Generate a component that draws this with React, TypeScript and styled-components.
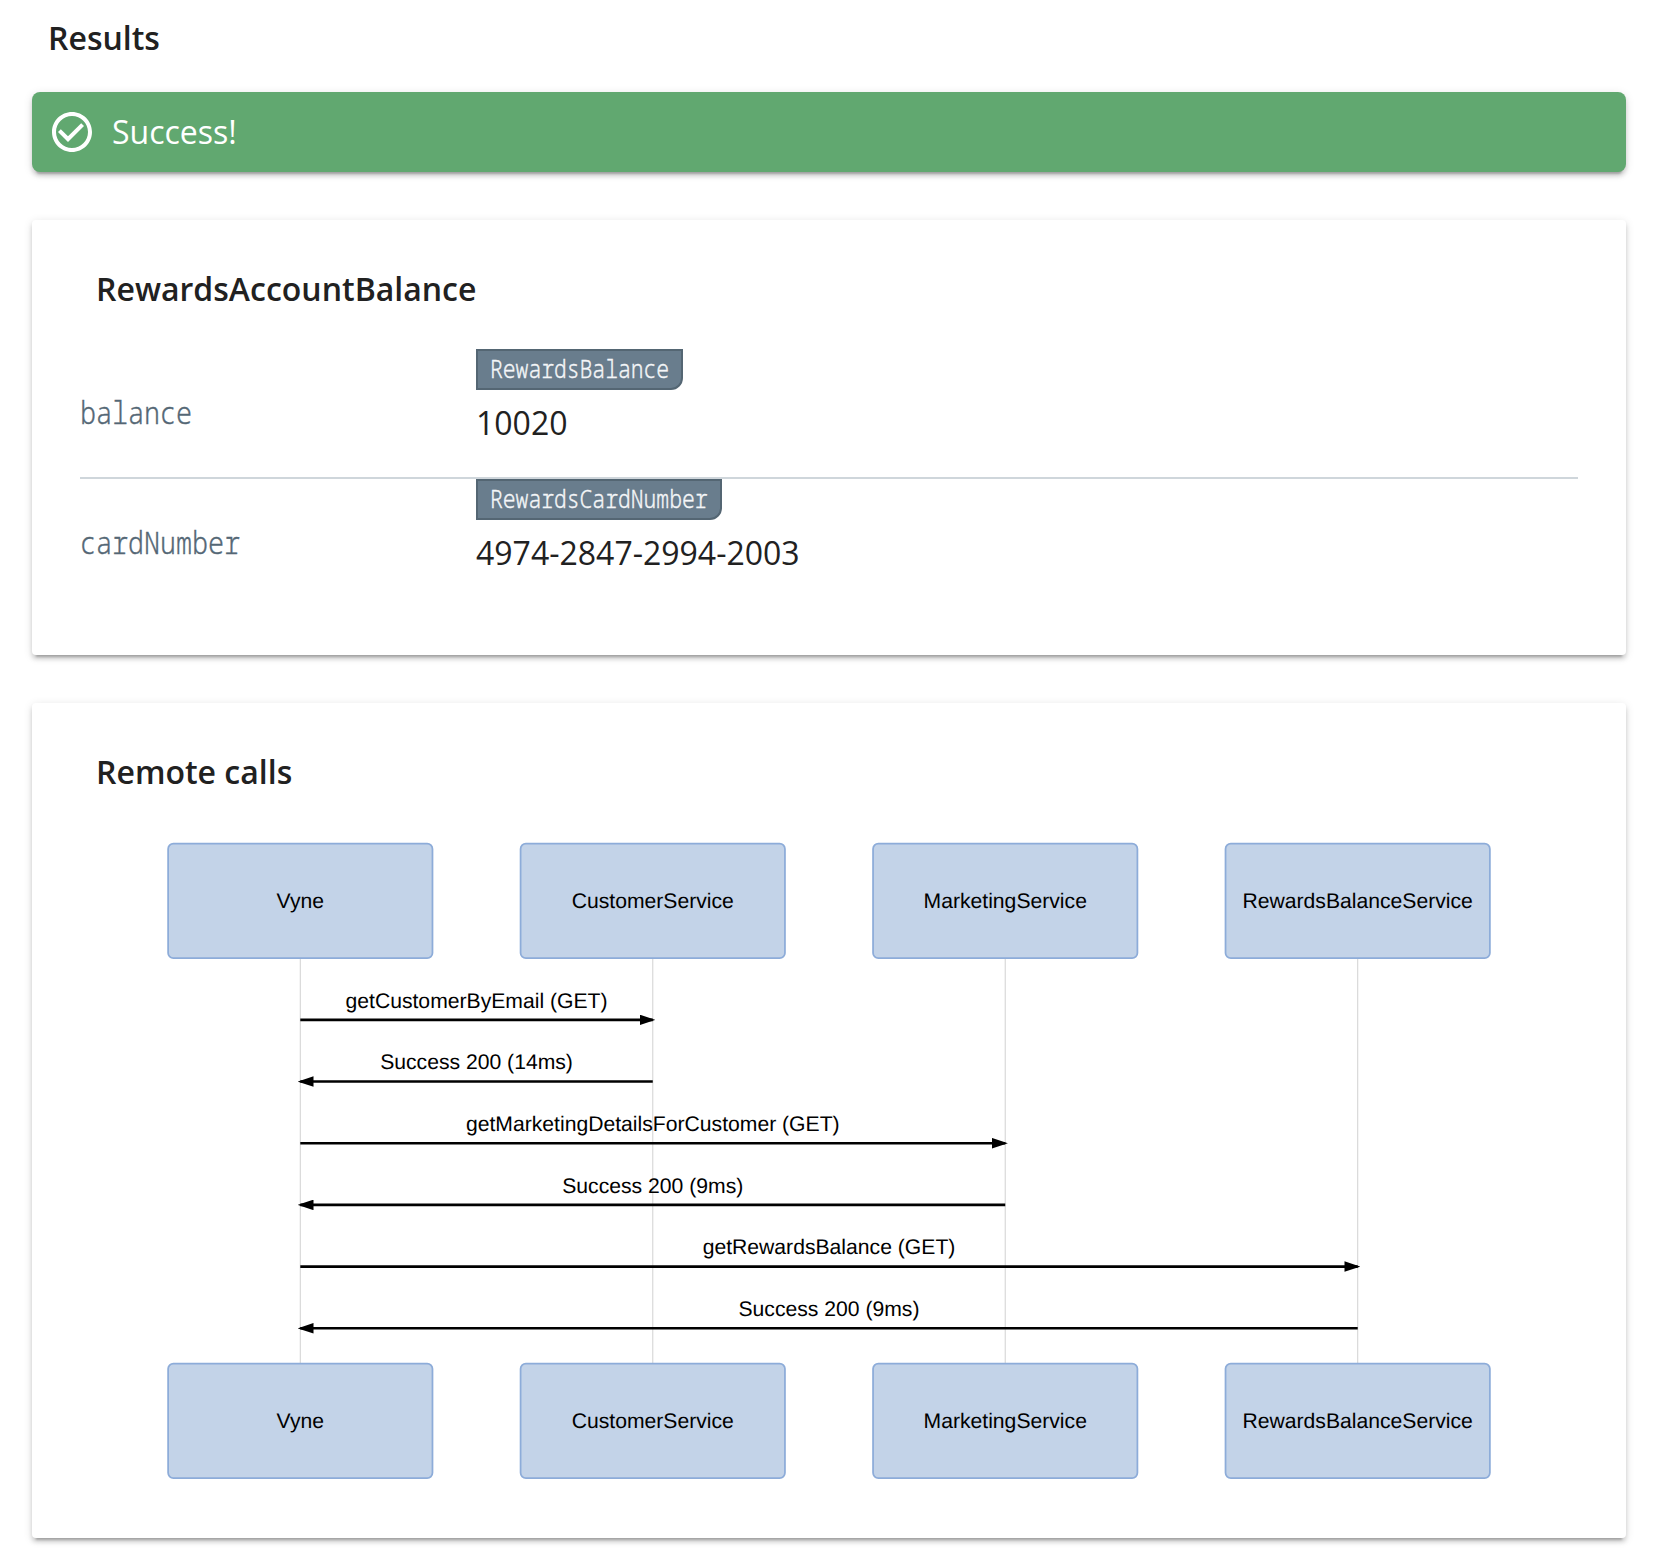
import React from "react";
import styled, { createGlobalStyle } from "styled-components";

const GlobalStyle = createGlobalStyle`
  body {
    margin: 0;
    background: #fff;
    color: #212121;
    font-family: "Open Sans", "Noto Sans", sans-serif;
    font-size: 32px;
    line-height: 44px;
  }
`;

const Page = styled.main`
  box-sizing: border-box;
  width: 1654px;
  padding: 16px 28px 26px 32px;
`;

const Heading = styled.h3<{ $height: number; $line?: number }>`
  margin: 0;
  padding: 0 16px;
  height: ${(p) => p.$height}px;
  font-size: 32px;
  font-weight: 600;
  line-height: ${(p) => p.$line ?? 42}px;
`;

const elevation = `
  0 6px 2px -4px rgba(0, 0, 0, 0.2),
  0 4px 4px 0 rgba(0, 0, 0, 0.14),
  0 2px 10px 0 rgba(0, 0, 0, 0.12)
`;

const Banner = styled.div`
  display: flex;
  align-items: center;
  gap: 16px;
  height: 80px;
  padding: 0 16px;
  border-radius: 8px;
  background: #61a870;
  color: #fff;
  box-shadow: ${elevation};
`;

const Card = styled.section<{ $bottom: number }>`
  margin-top: 48px;
  padding: 48px 48px ${(p) => p.$bottom}px;
  border-radius: 4px;
  background: #fff;
  box-shadow: ${elevation};
`;

const Attribute = styled.div`
  display: grid;
  grid-template-columns: 396px 1fr;
  height: 128px;

  & + & {
    border-top: 2px solid #cfd6db;
  }
`;

/* Condensed mono face: glyphs are narrowed to half an em per character. */
const Condensed = styled.span<{ $chars: number }>`
  display: inline-block;
  font-family: "Noto Sans Mono", "DejaVu Sans Mono", monospace;
  font-weight: 300;
  -webkit-text-stroke: 0.4px currentColor;
  margin-right: ${(p) => -p.$chars * 0.1}em;
  transform: scaleX(0.8333);
  transform-origin: 0 50%;
  white-space: nowrap;
`;

const AttributeName = styled.div`
  align-self: center;
  padding-bottom: 3px;
  color: #546775;
  line-height: 44px;
`;

const AttributeValue = styled.div`
  display: flex;
  flex-direction: column;
  align-items: flex-start;
  gap: 11px;
`;

const TypeTag = styled.div`
  box-sizing: border-box;
  height: 41px;
  padding: 0 12.5px 0 11.5px;
  border: 2px solid #546673;
  border-bottom-right-radius: 12px;
  background: #697d8d;
  color: #f4f6f8;
  font-size: 25.6px;
  line-height: 35px;
`;

const Diagram = styled.svg`
  display: block;
  width: 1498px;
  height: 669.7px;
  font-family: "Liberation Sans", Arial, sans-serif;
  font-size: 12px;
  text-rendering: geometricPrecision;
`;

function Mono({ text }: { text: string }) {
  return <Condensed $chars={text.length}>{text}</Condensed>;
}

const attributes = [
  { name: "balance", type: "RewardsBalance", value: "10020" },
  { name: "cardNumber", type: "RewardsCardNumber", value: "4974-2847-2994-2003" },
];

const actors = ["Vyne", "CustomerService", "MarketingService", "RewardsBalanceService"];

const calls = [
  { from: 0, to: 1, label: "getCustomerByEmail (GET)" },
  { from: 1, to: 0, label: "Success 200 (14ms)" },
  { from: 0, to: 2, label: "getMarketingDetailsForCustomer (GET)" },
  { from: 2, to: 0, label: "Success 200 (9ms)" },
  { from: 0, to: 3, label: "getRewardsBalance (GET)" },
  { from: 3, to: 0, label: "Success 200 (9ms)" },
];

const laneX = (i: number) => 75 + i * 200;

function Actor({ index, y }: { index: number; y: number }) {
  return (
    <g>
      <rect
        x={laneX(index) - 75}
        y={y}
        width={150}
        height={65}
        rx={3}
        fill="#c3d3e8"
        stroke="#8dacd9"
      />
      <text x={laneX(index)} y={y + 36.6} textAnchor="middle">
        {actors[index]}
      </text>
    </g>
  );
}

function SequenceDiagram() {
  return (
    <Diagram viewBox="-50 -10 850 380">
      <defs>
        <marker id="arrowhead" refX="5" refY="2" markerWidth="6" markerHeight="4" orient="auto">
          <path d="M0 0V4L6 2Z" />
        </marker>
      </defs>
      {actors.map((name, i) => (
        <line
          key={name}
          x1={laneX(i)}
          x2={laneX(i)}
          y1={65}
          y2={295}
          stroke="#d4d4d4"
          strokeWidth={0.6}
        />
      ))}
      {actors.map((name, i) => (
        <React.Fragment key={name}>
          <Actor index={i} y={0} />
          <Actor index={i} y={295} />
        </React.Fragment>
      ))}
      {calls.map(({ from, to, label }, i) => {
        const y = 100 + i * 35;
        return (
          <g key={i}>
            <text x={(laneX(from) + laneX(to)) / 2} y={y - 7} textAnchor="middle">
              {label}
            </text>
            <line
              x1={laneX(from)}
              x2={laneX(to)}
              y1={y}
              y2={y}
              stroke="#000"
              strokeWidth={1.5}
              markerEnd="url(#arrowhead)"
            />
          </g>
        );
      })}
    </Diagram>
  );
}

export default function App() {
  return (
    <>
      <GlobalStyle />
      <Page>
        <Heading $height={76} $line={44}>
          Results
        </Heading>
        <Banner>
          <svg width="48" height="48" viewBox="0 0 24 24" fill="currentColor">
            <path d="M16.59 7.58L10 14.17l-3.59-3.58L5 12l5 5 8-8zM12 2C6.48 2 2 6.48 2 12s4.48 10 10 10 10-4.48 10-10S17.52 2 12 2zm0 18c-4.42 0-8-3.58-8-8s3.58-8 8-8 8 3.58 8 8-3.58 8-8 8z" />
          </svg>
          <span>Success!</span>
        </Banner>
        <Card $bottom={48}>
          <Heading $height={81}>RewardsAccountBalance</Heading>
          {attributes.map((a) => (
            <Attribute key={a.name}>
              <AttributeName>
                <Mono text={a.name} />
              </AttributeName>
              <AttributeValue>
                <TypeTag>
                  <Mono text={a.type} />
                </TypeTag>
                <span>{a.value}</span>
              </AttributeValue>
            </Attribute>
          ))}
        </Card>
        <Card $bottom={42}>
          <Heading $height={75}>Remote calls</Heading>
          <SequenceDiagram />
        </Card>
      </Page>
    </>
  );
}
